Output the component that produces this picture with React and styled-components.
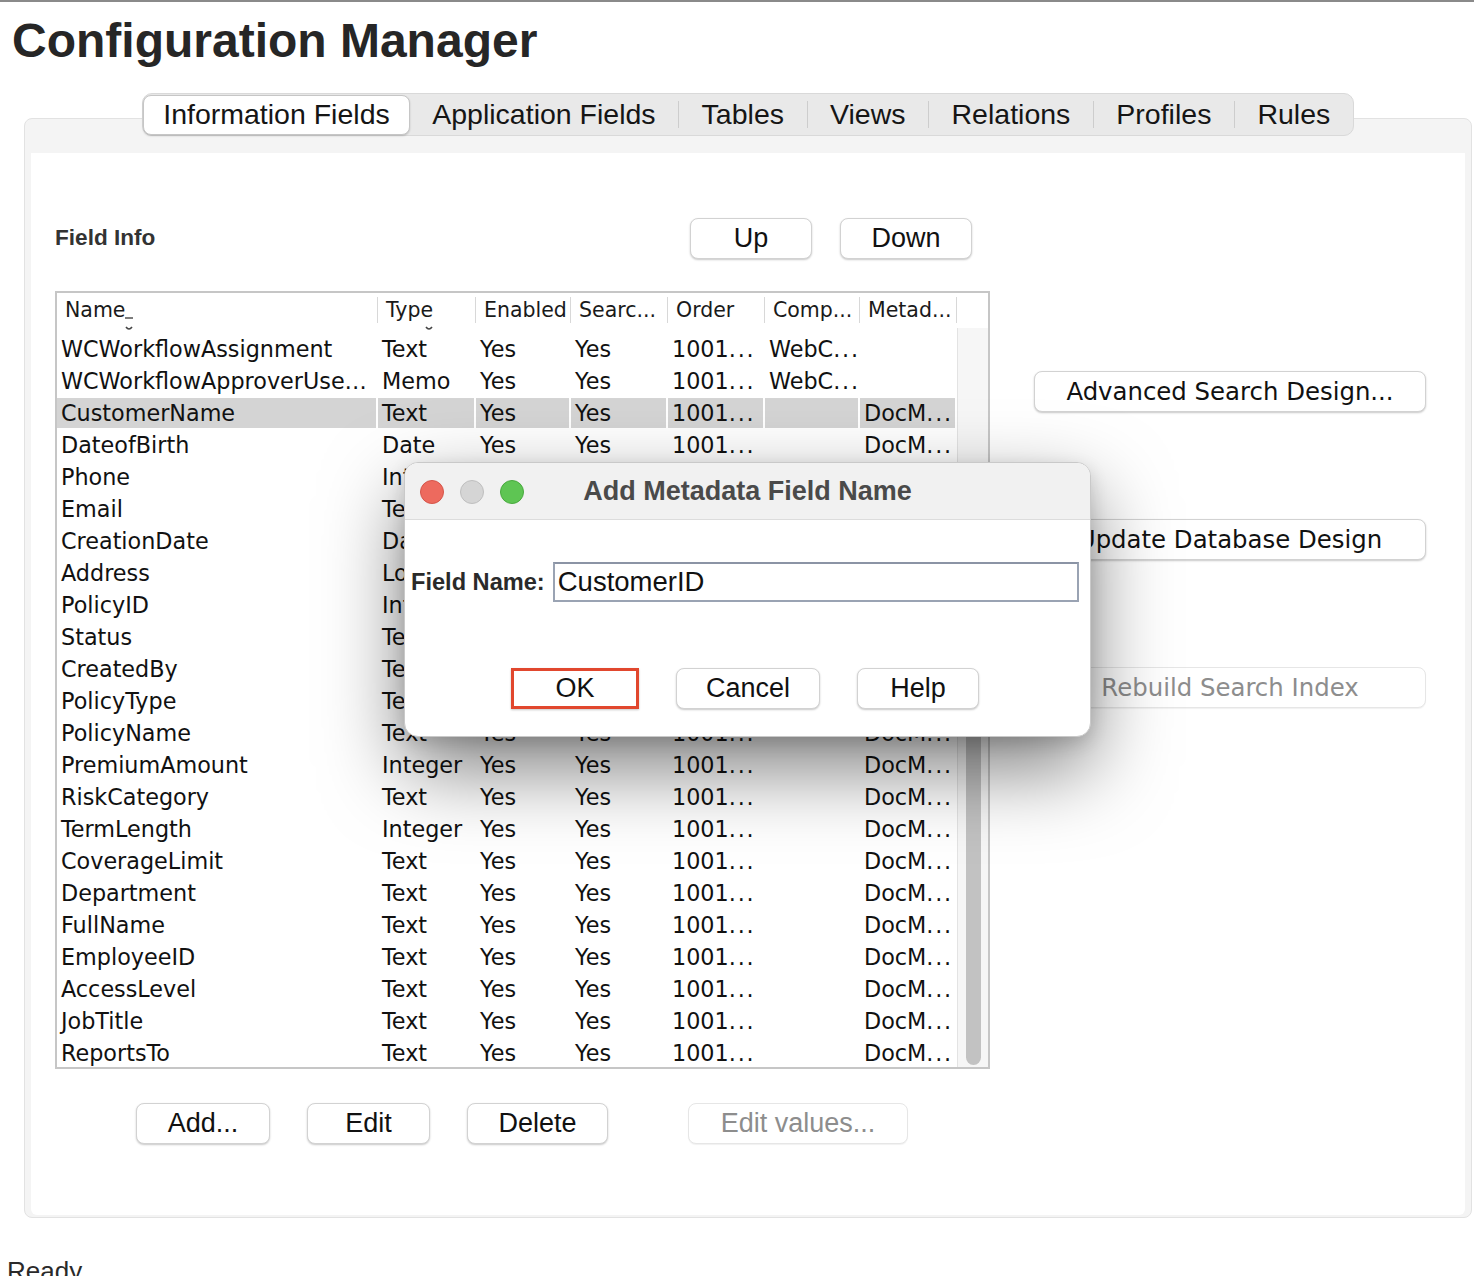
import React from "react";
import styled, { createGlobalStyle } from "styled-components";

const GlobalStyle = createGlobalStyle`
  html, body {
    margin: 0;
    padding: 0;
    background: #fff;
  }
  body {
    font-family: "Liberation Sans", Arial, sans-serif;
    color: #111;
    overflow: hidden;
  }
  * {
    box-sizing: border-box;
  }
`;

const tabs = [
  "Information Fields",
  "Application Fields",
  "Tables",
  "Views",
  "Relations",
  "Profiles",
  "Rules",
];

const columns = [
  { key: "name", label: "Name", width: 321, sort: "dash" },
  { key: "type", label: "Type", width: 98, sort: "arc" },
  { key: "enabled", label: "Enabled", width: 95 },
  { key: "search", label: "Searc...", width: 97 },
  { key: "order", label: "Order", width: 97 },
  { key: "comp", label: "Comp...", width: 95 },
  { key: "meta", label: "Metad...", width: 97 },
];

const gridCols = columns.map((c) => `${c.width}px`).join(" ");

// 임시 데이터
const fields = [
  ["WCWorkflowAssignment", "Text", "WebC..."],
  ["WCWorkflowApproverUse…", "Memo", "WebC..."],
  ["CustomerName", "Text"],
  ["DateofBirth", "Date"],
  ["Phone", "Integer"],
  ["Email", "Text"],
  ["CreationDate", "Date"],
  ["Address", "Long"],
  ["PolicyID", "Integer"],
  ["Status", "Text"],
  ["CreatedBy", "Text"],
  ["PolicyType", "Text"],
  ["PolicyName", "Text"],
  ["PremiumAmount", "Integer"],
  ["RiskCategory", "Text"],
  ["TermLength", "Integer"],
  ["CoverageLimit", "Text"],
  ["Department", "Text"],
  ["FullName", "Text"],
  ["EmployeeID", "Text"],
  ["AccessLevel", "Text"],
  ["JobTitle", "Text"],
  ["ReportsTo", "Text"],
].map(([name, type, comp]) => ({
  name,
  type,
  enabled: "Yes",
  search: "Yes",
  order: "1001...",
  comp: comp || "",
  meta: comp ? "" : "DocM...",
}));

// 잘린 값의 "..." 는 자바 테이블처럼 조금 넓게 표시
function CellText({ value }) {
  if (!value.endsWith("...")) return value;
  return (
    <>
      {value.slice(0, -3)}
      <Dots>...</Dots>
    </>
  );
}

function SortMark({ kind }) {
  return (
    <Mark width="10" height="16" viewBox="0 0 10 16" $left={kind === "dash" ? 67 : 46}>
      {kind === "dash" && <path d="M1 2 H9" stroke="#444" strokeWidth="1.4" />}
      <path d="M2 11 Q5 15 8 11" stroke="#444" strokeWidth="1.6" fill="none" />
    </Mark>
  );
}

function App() {
  return (
    <Page>
      <GlobalStyle />
      <Title>Configuration Manager</Title>

      <TabsRow>
        <TabBar>
          {tabs.map((t, i) => (
            <React.Fragment key={t}>
              {i > 1 && <TabSep />}
              <Tab $active={i === 0}>{t}</Tab>
            </React.Fragment>
          ))}
        </TabBar>
      </TabsRow>

      <Panel>
        <Content>
          <LeftCol>
            <InfoHeader>
              <SectionTitle>Field Info</SectionTitle>
              <ButtonGroup>
                <Button $w={122}>Up</Button>
                <Button $w={132}>Down</Button>
              </ButtonGroup>
            </InfoHeader>

            <TableFrame>
              <HeaderRow>
                <HeaderCells>
                  {columns.map((c) => (
                    <HeaderCell key={c.key}>
                      {c.label}
                      {c.sort && <SortMark kind={c.sort} />}
                    </HeaderCell>
                  ))}
                </HeaderCells>
              </HeaderRow>
              <TableBody>
                <Rows>
                  {fields.map((f, i) => (
                    <Row key={f.name}>
                      {columns.map((c) => (
                        <Cell key={c.key} $selected={i === 2}>
                          <CellText value={f[c.key]} />
                        </Cell>
                      ))}
                    </Row>
                  ))}
                </Rows>
                <ScrollTrack>
                  <ScrollThumb />
                </ScrollTrack>
              </TableBody>
            </TableFrame>

            <BottomButtons>
              <Button $w={134}>Add...</Button>
              <Button $w={123}>Edit</Button>
              <Button $w={141}>Delete</Button>
              <Button $w={220} $push={43} disabled>
                Edit values...
              </Button>
            </BottomButtons>
          </LeftCol>

          <RightCol>
            <SideButton>Advanced Search Design...</SideButton>
            <SideButton>Update Database Design</SideButton>
            <SideButton disabled>Rebuild Search Index</SideButton>
          </RightCol>
        </Content>
      </Panel>

      <Status>Ready</Status>

      <Dialog>
        <DialogTitleBar>
          <Lights>
            <Light $color="#ed6a5e" $border="#d5554a" />
            <Light $color="#d5d5d5" $border="#bfbfbf" />
            <Light $color="#5ec553" $border="#48a93e" />
          </Lights>
          <DialogTitle>Add Metadata Field Name</DialogTitle>
        </DialogTitleBar>
        <DialogBody>
          <FieldRow>
            <FieldLabel>Field Name:</FieldLabel>
            <FieldInput defaultValue="CustomerID" />
          </FieldRow>
          <DialogButtons>
            <Button $w={128} $marked>
              OK
            </Button>
            <Button $w={144}>Cancel</Button>
            <Button $w={122}>Help</Button>
          </DialogButtons>
        </DialogBody>
      </Dialog>
    </Page>
  );
}

export default App;

// 스타일링
const Page = styled.div`
  position: relative;
  width: 1474px;
  height: 1276px;
  border-top: 2px solid #8a8a8a;
  overflow: hidden;
`;

const Title = styled.h1`
  margin: 0;
  padding: 15px 0 0 12px;
  font-family: "Liberation Sans", Arial, sans-serif;
  font-size: 48px;
  line-height: 48px;
  font-weight: 700;
  color: #262626;
`;

const TabsRow = styled.div`
  position: relative;
  z-index: 1;
  display: flex;
  justify-content: center;
  margin: 28px 2px -18px 24px;
`;

const TabBar = styled.div`
  display: flex;
  align-items: center;
  height: 43px;
  background: #e9e9e9;
  border: 1px solid #d9d9d9;
  border-radius: 10px;
`;

const Tab = styled.div`
  display: flex;
  align-items: center;
  height: ${(p) => (p.$active ? "40px" : "41px")};
  padding: 0 ${(p) => (p.$active ? "19px" : "21.5px")};
  font-size: 28.5px;
  color: #151515;
  background: ${(p) => (p.$active ? "#fff" : "transparent")};
  border: 1px solid ${(p) => (p.$active ? "#c6c6c6" : "transparent")};
  border-radius: 8px;
  box-shadow: ${(p) => (p.$active ? "0 1px 2px rgba(0,0,0,0.18)" : "none")};
  white-space: nowrap;
`;

const TabSep = styled.div`
  width: 1px;
  height: 27px;
  background: #cdcdcd;
`;

const Panel = styled.div`
  display: flex;
  flex-direction: column;
  height: 1100px;
  margin: 0 2px 0 24px;
  padding: 34px 6px 2px 6px;
  background: #f4f4f4;
  border: 1px solid #e2e2e2;
  border-radius: 8px;
`;

const Content = styled.div`
  flex: 1;
  display: flex;
  align-items: flex-start;
  padding: 65px 0 0 24px;
  background: #fff;
  border-radius: 0 0 6px 6px;
`;

const LeftCol = styled.div`
  width: 935px;
  display: flex;
  flex-direction: column;
`;

const RightCol = styled.div`
  display: flex;
  flex-direction: column;
  gap: 107px;
  margin: 153px 0 0 44px;
`;

const InfoHeader = styled.div`
  display: flex;
  align-items: center;
  justify-content: space-between;
  height: 40px;
  padding-right: 18px;
  margin-bottom: 33px;
`;

const SectionTitle = styled.div`
  font-size: 22.6px;
  font-weight: 700;
  color: #333;
`;

const ButtonGroup = styled.div`
  display: flex;
  gap: 28px;
`;

const Button = styled.button`
  width: ${(p) => p.$w}px;
  height: 41px;
  margin-left: ${(p) => p.$push || 0}px;
  padding: 0;
  font-family: "Liberation Sans", Arial, sans-serif;
  font-size: 27px;
  color: ${(p) => (p.disabled ? "#8d8d8d" : "#111")};
  background: #fff;
  border: ${(p) => (p.$marked ? "3px solid #e1472e" : p.disabled ? "1px solid #e6e6e6" : "1px solid #d2d2d2")};
  border-radius: ${(p) => (p.$marked ? "0" : "8px")};
  box-shadow: ${(p) => (p.disabled ? "0 1px 1px rgba(0,0,0,0.06)" : "0 1px 2px rgba(0,0,0,0.22)")};
  cursor: default;
`;

const SideButton = styled(Button)`
  width: 392px;
  font-family: "DejaVu Sans", Verdana, sans-serif;
  font-size: 24.4px;
`;

const TableFrame = styled.div`
  width: 935px;
  height: 778px;
  display: flex;
  flex-direction: column;
  border: 2px solid #c6c6c6;
  background: #fff;
`;

const HeaderRow = styled.div`
  height: 35px;
  padding-top: 4px;
  flex-shrink: 0;
`;

const HeaderCells = styled.div`
  display: grid;
  grid-template-columns: ${gridCols};
`;

const HeaderCell = styled.div`
  position: relative;
  height: 26px;
  padding-left: 8px;
  font-family: "DejaVu Sans", Verdana, sans-serif;
  font-size: 20.5px;
  line-height: 26px;
  color: #1a1a1a;
  border-right: 1px solid #d8d8d8;
  white-space: nowrap;
`;

const Mark = styled.svg`
  position: absolute;
  left: ${(p) => p.$left}px;
  top: 19px;
  overflow: visible;
`;

const TableBody = styled.div`
  flex: 1;
  display: flex;
  min-height: 0;
`;

const Rows = styled.div`
  width: 900px;
  padding-top: 5px;
`;

const Row = styled.div`
  display: grid;
  grid-template-columns: ${gridCols};
  height: 32px;
`;

const Cell = styled.div`
  padding: 0 4px;
  font-family: "DejaVu Sans", Verdana, sans-serif;
  font-size: 22.3px;
  line-height: 30px;
  color: #111;
  white-space: nowrap;
  overflow: hidden;
  border-top: 1px solid transparent;
  border-bottom: 1px solid transparent;
  border-right: 2px solid transparent;
  background-clip: padding-box;
  background-color: ${(p) => (p.$selected ? "#d4d4d4" : "transparent")};
`;

const Dots = styled.span`
  letter-spacing: 1.8px;
`;

const ScrollTrack = styled.div`
  width: 31px;
  display: flex;
  flex-direction: column;
  padding: 200px 7px 2px 8px;
  background: #f6f6f6;
  border-left: 1px solid #e3e3e3;
`;

const ScrollThumb = styled.div`
  flex: 1;
  background: #c2c2c2;
  border-radius: 8px;
`;

const BottomButtons = styled.div`
  display: flex;
  gap: 37px;
  margin-top: 34px;
  padding-left: 81px;
`;

const Status = styled.div`
  margin: 40px 0 0 7px;
  font-size: 26px;
  line-height: 26px;
  color: #2a2a2a;
`;

const Dialog = styled.div`
  position: absolute;
  left: 404px;
  top: 460px;
  width: 687px;
  height: 275px;
  display: flex;
  flex-direction: column;
  background: #fff;
  border: 1px solid #c9c9c9;
  border-radius: 14px;
  overflow: hidden;
  box-shadow: 0 32px 80px rgba(0, 0, 0, 0.5), 0 6px 18px rgba(0, 0, 0, 0.14);
`;

const DialogTitleBar = styled.div`
  position: relative;
  height: 57px;
  display: flex;
  align-items: center;
  justify-content: center;
  background: #f1f1f1;
  border-bottom: 1px solid #dcdcdc;
`;

const Lights = styled.div`
  position: absolute;
  left: 15px;
  top: 17px;
  display: flex;
  gap: 16px;
`;

const Light = styled.div`
  width: 24px;
  height: 24px;
  border-radius: 50%;
  background: ${(p) => p.$color};
  border: 1px solid ${(p) => p.$border};
`;

const DialogTitle = styled.div`
  font-size: 27px;
  font-weight: 700;
  color: #4a4a4a;
`;

const DialogBody = styled.div`
  flex: 1;
  display: flex;
  flex-direction: column;
  padding: 42px 11px 0 6px;
`;

const FieldRow = styled.div`
  display: flex;
  align-items: center;
  gap: 8px;
`;

const FieldLabel = styled.label`
  font-size: 23.6px;
  font-weight: 700;
  color: #2a2a2a;
  white-space: nowrap;
`;

const FieldInput = styled.input`
  flex: 1;
  height: 40px;
  padding: 0 3px;
  font-family: "Liberation Sans", Arial, sans-serif;
  font-size: 27.5px;
  color: #111;
  border: 2px solid #9aa3b3;
  border-top-color: #8b94a5;
  outline: none;
  background: #fff;
`;

const DialogButtons = styled.div`
  display: flex;
  align-items: center;
  gap: 37px;
  margin-top: 66px;
  padding-left: 100px;
`;
